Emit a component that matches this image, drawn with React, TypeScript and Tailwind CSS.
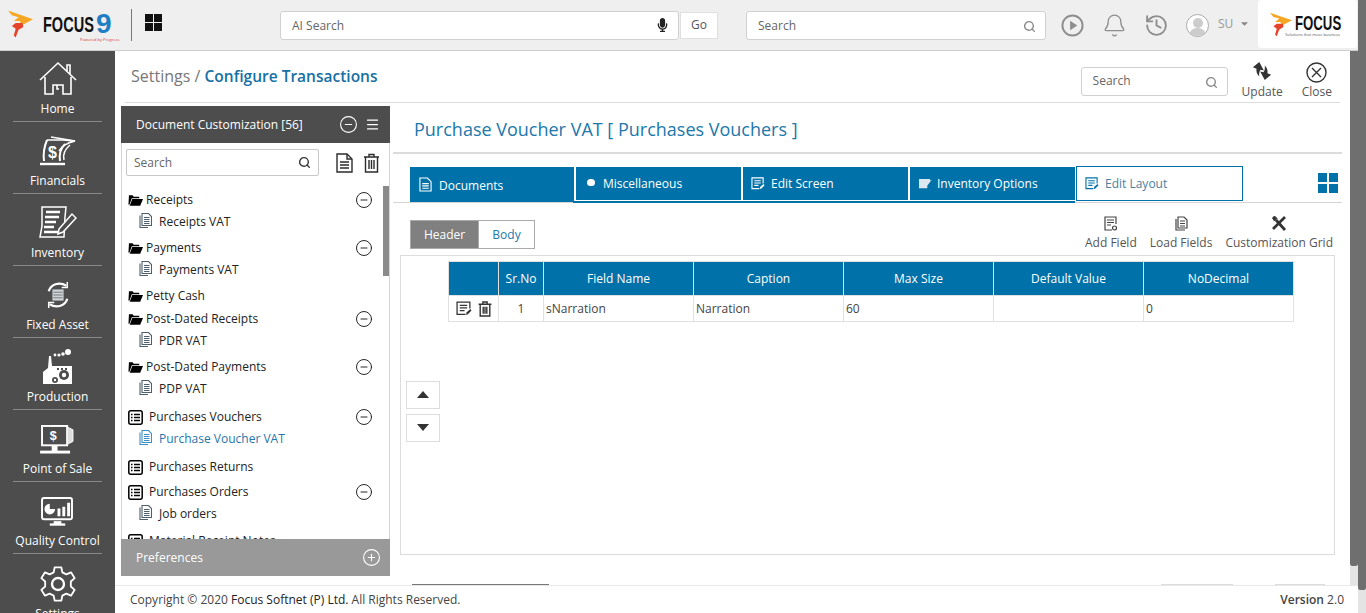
import type { ReactNode } from 'react';
import { Bell, CircleMinus, CirclePlus, History, Menu, Search } from 'lucide-react';
import { FaMicrophone, FaCaretDown } from 'react-icons/fa';

function Flame({ className }: { className: string }) {
  return (
    <svg viewBox="0 0 26 28" className={className}>
      <path d="M0 0 L26 9 L15 15 L12 11 L6 11 L11 7 L4 5 Z" fill="#f5a623" />
      <path d="M8 13 L15 13 L16 17 L11 20 L8 28 L6 26 L8 19 L4 16 Z" fill="#e5432a" />
    </svg>
  );
}

function HomeIcon() {
  return (
    <svg viewBox="0 0 38 36" className="w-[38px] h-[36px]" fill="none" stroke="#fff" strokeWidth="1.6">
      <path d="M1 19 L19 2 L37 19" />
      <path d="M28 10 V4 H31 V13" />
      <path d="M6 16 V33 H14 V24 H24 V33 H32 V16" />
      <path d="M18 24 V28 H20" />
    </svg>
  );
}

function FinancialsIcon() {
  return (
    <svg viewBox="0 0 38 32" className="w-[38px] h-[32px]" fill="none" stroke="#fff" strokeWidth="2">
      <path d="M8 5 C5 12 4 18 5 26" />
      <path d="M8 5 H24 L36 6 C28 8 22 12 20 16" strokeWidth="1.5" />
      <path d="M12 2 L36 6" strokeWidth="1.5" />
      <path d="M26 9 C21 14 20 20 21 26" />
      <path d="M31 10 C25 15 24 21 25 25" strokeWidth="1.5" />
      <path d="M1 29 H26" strokeWidth="2.4" />
      <text x="9" y="23" fontSize="16" fontWeight="700" fill="#fff" stroke="none" fontFamily="'Liberation Sans', sans-serif">$</text>
    </svg>
  );
}

function InventoryIcon() {
  return (
    <svg viewBox="0 0 38 34" className="w-[38px] h-[34px]" fill="none" stroke="#fff" strokeWidth="1.5">
      <path d="M3 1 H27 L26 11 L25 31 H1 L3 20 Z" />
      <path d="M7 6 H21 M6 11 H20 M6 16 H17 M5 21 H15 M5 26 H19" strokeWidth="2.4" />
      <path d="M20 23 L33 8 L37 12 L24 26 L19 28 Z" fill="#4d4d4d" />
    </svg>
  );
}

function FixedAssetIcon() {
  return (
    <svg viewBox="0 0 28 30" className="w-[26px] h-[28px]" fill="none" stroke="#fff" strokeWidth="2.4">
      <path d="M4 11 C6 4 15 0 23 5" />
      <path d="M24 1 V7 H18" strokeWidth="1.6" />
      <path d="M24 19 C22 26 13 30 5 25" />
      <path d="M4 29 V23 H10" strokeWidth="1.6" />
      <rect x="8" y="9" width="12" height="12" fill="#cfd4d8" stroke="none" />
      <path d="M9 12 H19 M9 15 H19 M9 18 H19" stroke="#6f7478" strokeWidth="1" />
    </svg>
  );
}

function ProductionIcon() {
  return (
    <svg viewBox="0 0 32 36" className="w-[32px] h-[36px]" fill="#fff">
      <path d="M1 23 L6 19 L7 7 H9 L10 17 H30 V35 H1 Z" />
      <circle cx="13" cy="6" r="1.4" />
      <circle cx="17" cy="6" r="1.6" />
      <circle cx="21" cy="5" r="1.8" />
      <circle cx="26" cy="3" r="3" />
      <circle cx="22" cy="26" r="5" fill="#4d4d4d" />
      <circle cx="22" cy="26" r="2.2" />
      <circle cx="13" cy="31" r="3" fill="#4d4d4d" />
      <circle cx="13" cy="31" r="1.2" />
      <path d="M15 19 H17 V21 H15 Z M19 19 H21 V21 H19 Z M23 19 H25 V21 H23 Z" fill="#4d4d4d" />
    </svg>
  );
}

function PosIcon() {
  return (
    <svg viewBox="0 0 38 30" className="w-[37px] h-[29px]" fill="none" stroke="#fff" strokeWidth="2">
      <rect x="3" y="1" width="26" height="20" />
      <path d="M29 2 L35 5 V17 L29 20 Z" fill="#ddd" strokeWidth="1" />
      <path d="M14 21 V26 H18 V21" fill="#fff" />
      <path d="M1 28 H32" strokeWidth="3" />
      <text x="11" y="16" fontSize="13" fontWeight="700" fill="#fff" stroke="none" fontFamily="'Liberation Sans', sans-serif">$</text>
    </svg>
  );
}

function QualityIcon() {
  return (
    <svg viewBox="0 0 34 30" className="w-[33px] h-[29px]" fill="none" stroke="#fff" strokeWidth="2">
      <rect x="1" y="1" width="31" height="22" rx="2" />
      <path d="M14 25 V27 H20 V25" fill="#fff" />
      <path d="M9 28.5 H25" strokeWidth="2.4" />
      <path d="M9 7 A5.5 5.5 0 1 0 14.5 12.5 H9 Z" fill="#fff" stroke="none" />
      <path d="M17 12 H20 V20 H17 Z M22 10 H25 V20 H22 Z M27 6 H30 V20 H27 Z" fill="#fff" stroke="none" />
    </svg>
  );
}

function SettingsIcon() {
  return (
    <svg viewBox="0 0 24 24" className="w-[40px] h-[40px]" fill="none" stroke="#fff" strokeWidth="1.1">
      <circle cx="12" cy="12" r="3.6" strokeWidth="1.4" />
      <path d="M10 2 H14 L14.6 5 L17 6.2 L19.8 5 L22 8.5 L19.7 10.5 V13.5 L22 15.5 L19.8 19 L17 17.8 L14.6 19 L14 22 H10 L9.4 19 L7 17.8 L4.2 19 L2 15.5 L4.3 13.5 V10.5 L2 8.5 L4.2 5 L7 6.2 L9.4 5 Z" strokeLinejoin="round" />
    </svg>
  );
}

function NavItem({ icon, label, last, first }: { icon: ReactNode; label: string; last?: boolean; first?: boolean }) {
  return (
    <div className={`shrink-0 w-[89px] mx-auto flex flex-col items-center justify-end pb-[3px] ${first ? 'h-[71px]' : 'h-[72px]'} ${last ? 'border-b-0' : 'border-b border-[#8a8a8a]'}`}>
      <div className="h-[40px] flex items-center justify-center">{icon}</div>
      <span className="mt-[1px] leading-[18px] text-[12px] text-white whitespace-nowrap">{label}</span>
    </div>
  );
}

function FolderIcon() {
  return (
    <svg viewBox="0 0 16 12" className="w-[15px] h-[12px] shrink-0" fill="#000">
      <path d="M1 1 H5 L6 2.5 H12 V4 H4 L1.5 11 H0.5 Z" />
      <path d="M4.5 5 H16 L13 12 H1.8 Z" />
    </svg>
  );
}

function ListIcon() {
  return (
    <svg viewBox="0 0 15 15" className="w-[15px] h-[15px] shrink-0" fill="none" stroke="#000" strokeWidth="1.5">
      <rect x="0.8" y="0.8" width="13.4" height="13.4" rx="2" />
      <path d="M3 4.5 H4.5 M6 4.5 H12 M3 7.5 H4.5 M6 7.5 H12 M3 10.5 H4.5 M6 10.5 H12" strokeWidth="1.3" />
    </svg>
  );
}

function LeafIcon({ active }: { active?: boolean }) {
  const c = active ? '#3f8fc4' : '#4f5f6c';
  return (
    <svg viewBox="0 0 13 15" className="w-[13px] h-[15px] shrink-0 -mt-[3px]" fill="none" stroke={c} strokeWidth="1.1">
      <path d="M1 2.5 V14.5 H9" />
      <path d="M3 0.5 H9.5 L12.5 3.5 V12.5 H3 Z" fill="#fff" />
      <path d="M5 4.5 H10.5 M5 6.5 H10.5 M5 8.5 H10.5 M5 10.5 H10.5" />
    </svg>
  );
}

type TreeGroup = { name: string; icon: 'folder' | 'list'; leaf?: string; active?: boolean; cls: string; toggle?: boolean };

const TREE: TreeGroup[] = [
  { name: 'Receipts', icon: 'folder', leaf: 'Receipts VAT', cls: 'h-[48px]', toggle: true },
  { name: 'Payments', icon: 'folder', leaf: 'Payments VAT', cls: 'h-[48px]', toggle: true },
  { name: 'Petty Cash', icon: 'folder', cls: 'h-[23px]' },
  { name: 'Post-Dated Receipts', icon: 'folder', leaf: 'PDR VAT', cls: 'h-[48px]', toggle: true },
  { name: 'Post-Dated Payments', icon: 'folder', leaf: 'PDP VAT', cls: 'h-[50px]', toggle: true },
  { name: 'Purchases Vouchers', icon: 'list', leaf: 'Purchase Voucher VAT', active: true, cls: 'h-[50px]', toggle: true },
  { name: 'Purchases Returns', icon: 'list', cls: 'h-[25px]' },
  { name: 'Purchases Orders', icon: 'list', leaf: 'Job orders', cls: 'h-[49px]', toggle: true },
  { name: 'Material Receipt Notes', icon: 'list', cls: 'h-[25px]' },
];

function Tree() {
  return (
    <div className="relative flex-1 min-h-0 overflow-hidden pt-[3px]">
      {TREE.map((g) => (
        <div key={g.name} className={g.cls}>
          <div className={`flex items-center h-[22px] pl-[6px] text-[12px] text-[#222] ${g.icon === 'folder' ? 'gap-[3px]' : 'gap-[6px]'}`}>
            {g.icon === 'folder' ? <FolderIcon /> : <ListIcon />}
            <span className="whitespace-nowrap">{g.name}</span>
            {g.toggle && <CircleMinus className="w-[18px] h-[18px] ml-auto mr-[16px] text-[#222]" strokeWidth={1.3} />}
          </div>
          {g.leaf && (
            <div className={`flex items-center gap-[7px] pl-[17px] h-[22px] text-[12px] ${g.active ? 'text-[#1f77ac]' : 'text-[#222]'}`}>
              <LeafIcon active={g.active} />
              <span>{g.leaf}</span>
            </div>
          )}
        </div>
      ))}
      {/* tree scrollbar */}
      <div className="absolute right-0 top-0 w-[6px] h-[90px] bg-[#8a8a8a]" />
    </div>
  );
}

function TreePanel() {
  return (
    <div className="w-[269px] shrink-0 ml-[6px] mt-[3px] mb-[9px] flex flex-col bg-white">
      <div className="h-[37px] shrink-0 bg-[#4d4d4d] flex items-center pl-[15px] pr-[10px] text-[12px] text-white">
        <span>Document Customization [56]</span>
        <CircleMinus className="ml-auto w-[19px] h-[19px]" strokeWidth={1.4} />
        <Menu className="ml-[7px] w-[15px] h-[15px]" strokeWidth={2} />
      </div>
      <div className="flex-1 min-h-0 flex flex-col border-x border-[#d4d4d4]">
        <div className="h-[39px] mb-[4px] shrink-0 flex items-center pl-[4px]">
          <div className="w-[193px] h-[27px] flex items-center justify-between px-[7px] border border-[#c8c8c8] rounded-[2px] text-[12px] text-[#666]">
            <span>Search</span>
            <Search className="w-[13px] h-[13px] text-[#333]" strokeWidth={2.6} />
          </div>
          <svg viewBox="0 0 17 20" className="ml-[17px] w-[17px] h-[20px]" fill="none" stroke="#2c2c2c" strokeWidth="1.4">
            <path d="M1 1 H11 L16 6 V19 H1 Z" />
            <path d="M11 1 V6 H16 M4 9 H13 M4 12 H13 M4 15 H13" />
          </svg>
          <svg viewBox="0 0 17 20" className="ml-[10px] w-[17px] h-[20px]" fill="none" stroke="#2c2c2c" strokeWidth="1.4">
            <path d="M1 4 H16 M6 4 V1.5 H11 V4 M2.5 4 V19 H14.5 V4 M6 7 V16 M8.5 7 V16 M11 7 V16" />
          </svg>
        </div>
        <Tree />
      </div>
      <div className="h-[37px] shrink-0 bg-[#999] flex items-center pl-[15px] pr-[9px] text-[12px] text-white">
        <span>Preferences</span>
        <CirclePlus className="ml-auto w-[19px] h-[19px]" strokeWidth={1.4} />
      </div>
    </div>
  );
}

function TabDoc({ color = '#fff' }: { color?: string }) {
  return (
    <svg viewBox="0 0 14 16" className="w-[13px] h-[15px] -mt-[2px]" fill="none" stroke={color} strokeWidth="1.2">
      <path d="M1 1 H9 L13 5 V15 H1 Z M3.5 7 H10.5 M3.5 9.5 H10.5 M3.5 12 H10.5" />
    </svg>
  );
}

function TabEdit({ color = '#fff', className = 'w-[14px] h-[13px]' }: { color?: string; className?: string }) {
  return (
    <svg viewBox="0 0 15 14" className={className} fill="none" stroke={color} strokeWidth="1.2">
      <path d="M9 12.5 H1 V1 H13 V7 M3.5 4 H10.5 M3.5 6.5 H10.5 M3.5 9 H8" />
      <path d="M9.5 13 L10 10.5 L13.5 7.5 L14.5 8.8 L11.2 12.5 Z" fill={color} stroke="none" />
    </svg>
  );
}

function Tabs() {
  return (
    <div className="relative shrink-0 flex h-[37px] mt-[13px] pl-[17px] pr-[4px]">
      <div className="absolute left-0 right-0 top-[35px] h-px bg-[#d4d4d4]" />
      <div className="relative flex items-start">
        <div className="w-[164px] h-[35px] shrink-0 flex items-center gap-[7px] pl-[9px] pt-[2px] bg-[#0072a9] text-white text-[12px]">
          <TabDoc />
          <span>Documents</span>
        </div>
        <div className="flex flex-col">
          <div className="flex h-[33px] text-white text-[12px]">
            <div className="w-[165px] ml-[2px] flex items-center gap-[8px] pl-[11px] bg-[#0072a9]">
              <span className="w-[8px] h-[7px] rounded-full bg-white mb-[3px]" />
              <span>Miscellaneous</span>
            </div>
            <div className="w-[165px] ml-[2px] flex items-center gap-[6px] pl-[8px] bg-[#0072a9]">
              <TabEdit />
              <span>Edit Screen</span>
            </div>
            <div className="w-[165px] ml-[2px] flex items-center gap-[5px] pl-[8px] bg-[#0072a9]">
              <svg viewBox="0 0 15 13" className="w-[14px] h-[12px]" fill="#dce8ef">
                <path d="M1 1 H13 V3 L15 2 L10 8 V11 H1 Z" />
              </svg>
              <span>Inventory Options</span>
            </div>
          </div>
          <div className="h-[2px] mt-[1px] -ml-px bg-[#0072a9]" />
        </div>
        <div className="-mt-[1px] ml-px w-[167px] h-[35px] shrink-0 flex items-center gap-[6px] pl-[8px] bg-white border border-[#0072a9] text-[12px] text-[#4a7f9e]">
          <TabEdit color="#0072a9" />
          <span>Edit Layout</span>
        </div>
      </div>
      <div className="relative ml-auto mt-[6px] grid grid-cols-2 gap-[2px] w-[20px] h-[20px]">
        <span className="bg-[#0072a9]" />
        <span className="bg-[#0072a9]" />
        <span className="bg-[#0072a9]" />
        <span className="bg-[#0072a9]" />
      </div>
    </div>
  );
}

function ToolAction({ icon, label }: { icon: ReactNode; label: string }) {
  return (
    <div className="flex flex-col items-center text-[12px] leading-[16px] text-[#555]">
      <div className="h-[18px] mb-[3px] flex items-center">{icon}</div>
      <span className="whitespace-nowrap">{label}</span>
    </div>
  );
}

const HEADS = ['', 'Sr.No', 'Field Name', 'Caption', 'Max Size', 'Default Value', 'NoDecimal'];

function FieldTable() {
  return (
    <table className="table-fixed w-[845px] border-collapse text-[12px] text-[#444]">
      <colgroup>
        <col className="w-[50px]" />
        <col className="w-[45px]" />
        <col className="w-[150px]" />
        <col className="w-[150px]" />
        <col className="w-[150px]" />
        <col className="w-[150px]" />
        <col className="w-[150px]" />
      </colgroup>
      <thead>
        <tr className="h-[34px] bg-[#0072a9] text-white">
          {HEADS.map((h, i) => (
            <th key={i} className="font-normal border border-[#e0e0e0] p-0">{h}</th>
          ))}
        </tr>
      </thead>
      <tbody>
        <tr className="h-[26px]">
          <td className="border border-[#e0e0e0] p-0">
            <div className="flex items-center justify-center gap-[6px]">
              <TabEdit color="#333" className="w-[16px] h-[15px]" />
              <svg viewBox="0 0 13 15" className="w-[14px] h-[16px]" fill="none" stroke="#333" strokeWidth="1.3">
                <path d="M0.5 3 H12.5 M4.5 3 V1 H8.5 V3 M2 3 V14 H11 V3 M4.8 5.5 V12 M6.5 5.5 V12 M8.2 5.5 V12" />
              </svg>
            </div>
          </td>
          <td className="border border-[#e0e0e0] p-0 text-center">1</td>
          <td className="border border-[#e0e0e0] px-[2px] py-0">sNarration</td>
          <td className="border border-[#e0e0e0] px-[2px] py-0">Narration</td>
          <td className="border border-[#e0e0e0] px-[2px] py-0">60</td>
          <td className="border border-[#e0e0e0] px-[2px] py-0"></td>
          <td className="border border-[#e0e0e0] px-[2px] py-0">0</td>
        </tr>
      </tbody>
    </table>
  );
}

function EditorPanel() {
  return (
    <div className="flex-1 min-w-0 ml-[3px] mr-[8px] flex flex-col overflow-hidden bg-white">
      <div className="h-[51px] shrink-0 flex items-center pl-[21px] pt-[4px] text-[18px] text-[#2078ab] border-b-2 border-[#dcdcdc]">
        Purchase Voucher VAT [ Purchases Vouchers ]
      </div>
      <Tabs />
      <div className="shrink-0 flex items-start justify-between h-[51px] pl-[17px] pr-[9px] pt-[16px]">
        <div className="flex h-[29px] text-[12px]">
          <div className="w-[69px] flex items-center justify-center bg-[#808080] border border-[#aaa] text-white">Header</div>
          <div className="w-[56px] flex items-center justify-center border border-[#aaa] border-l-0 text-[#2078ab]">Body</div>
        </div>
        <div className="flex gap-[13px] -mt-[6px]">
          <ToolAction label="Add Field" icon={
            <svg viewBox="0 0 13 15" className="w-[13px] h-[15px]" fill="none" stroke="#444" strokeWidth="1.2">
              <path d="M12 8 V1 H1 V14 H8 M3 4 H10 M3 6.5 H10 M3 9 H7" />
              <circle cx="10.5" cy="12" r="2" />
            </svg>
          } />
          <ToolAction label="Load Fields" icon={
            <svg viewBox="0 0 13 15" className="w-[13px] h-[15px]" fill="none" stroke="#444" strokeWidth="1.2">
              <path d="M1 3 V14 H10 M3 1 H9 L12 4 V12 H3 Z M5 5 H10 M5 7.5 H10 M5 10 H10" />
            </svg>
          } />
          <ToolAction label="Customization Grid" icon={
            <svg viewBox="0 0 16 16" className="w-[16px] h-[16px]" fill="none" stroke="#333">
              <path d="M5 5 L14 15" strokeWidth="2.8" />
              <path d="M1.5 3 L3.5 1 L6 3.5 L3.5 6 Z" fill="#333" strokeWidth="1" />
              <path d="M14 2 L2 14" strokeWidth="2.6" />
            </svg>
          } />
        </div>
      </div>
      <div className="h-[300px] shrink-0 mx-[7px] border border-[#dcdcdc] flex flex-col pt-[5px]">
        <div className="pl-[47px]">
          <FieldTable />
        </div>
        <div className="mt-[59px] pl-[5px] flex flex-col gap-[5px]">
          <div className="w-[34px] h-[28px] border border-[#ddd] flex items-center justify-center">
            <span className="w-0 h-0 mb-[2px] border-x-[6px] border-x-transparent border-b-[7px] border-b-[#333]" />
          </div>
          <div className="w-[34px] h-[28px] border border-[#ddd] flex items-center justify-center">
            <span className="w-0 h-0 mb-[2px] border-x-[6px] border-x-transparent border-t-[7px] border-t-[#333]" />
          </div>
        </div>
      </div>
      {/* action buttons cut off by the footer */}
      <div className="mt-[29px] h-[2px] shrink-0 flex pl-[19px]">
        <span className="w-[137px] bg-[#777]" />
        <span className="ml-[612px] w-[72px] bg-[#ddd]" />
        <span className="ml-[42px] w-[50px] bg-[#ddd]" />
      </div>
    </div>
  );
}

function TopBar() {
  return (
    <header className="h-[51px] shrink-0 flex items-center bg-[#efefef] border-b border-[#cfcfcf]">
      <div className="relative w-[131px] h-full shrink-0 flex items-center pl-[8px]">
        <Flame className="w-[25px] h-[28px] -mt-[2px]" />
        <span className="ml-[10px] w-[53px] -mt-[1px] whitespace-nowrap font-['Liberation_Sans',sans-serif] font-bold text-[22px] text-[#111] inline-block scale-x-[0.66] origin-left">FOCUS</span>
        <span className="-mt-[3px] leading-none font-['Liberation_Sans',sans-serif] font-bold text-[28px] text-[#1f7fc4]">9</span>
        <span className="absolute left-[80px] top-[37px] text-[4px] leading-[5px] whitespace-nowrap text-[#d43a3a]">Powered by Progress</span>
      </div>
      <div className="w-px h-[32px] bg-[#777] shrink-0 -mt-[1px]" />
      <div className="ml-[13px] grid grid-cols-2 gap-[1px] w-[17px] h-[17px] -mt-[5px] shrink-0">
        <span className="bg-[#111]" />
        <span className="bg-[#111]" />
        <span className="bg-[#111]" />
        <span className="bg-[#111]" />
      </div>
      <div className="ml-[118px] w-[399px] h-[29px] flex items-center justify-between pl-[11px] pr-[10px] bg-white border border-[#d0d0d0] rounded-[3px] text-[12px] text-[#666] shrink-0">
        <span className="mt-[1px]">AI Search</span>
        <FaMicrophone className="w-[11px] h-[14px] text-[#222]" />
      </div>
      <div className="ml-px w-[38px] h-[27px] flex items-center justify-center bg-white border border-[#e0e0e0] text-[12px] text-[#555] shrink-0">Go</div>
      <div className="ml-[28px] w-[300px] h-[29px] flex items-center justify-between pl-[11px] pr-[9px] bg-white border border-[#d0d0d0] rounded-[3px] text-[12px] text-[#666] shrink-0">
        <span className="mt-[1px]">Search</span>
        <Search className="w-[13px] h-[13px] text-[#888] mt-[2px]" strokeWidth={2.6} />
      </div>
      <svg viewBox="0 0 24 24" className="ml-[15px] w-[23px] h-[23px] shrink-0" fill="none" stroke="#8d8d8d" strokeWidth="2">
        <circle cx="12" cy="12" r="10.5" />
        <path d="M9.5 7 L17 12 L9.5 17 Z" fill="#8d8d8d" stroke="none" />
      </svg>
      <Bell className="ml-[18px] w-[25px] h-[25px] text-[#8d8d8d] shrink-0" strokeWidth={1.2} />
      <History className="ml-[17px] w-[25px] h-[25px] text-[#8d8d8d] shrink-0" strokeWidth={1.8} />
      <div className="ml-[17px] w-[23px] h-[23px] rounded-full bg-white border border-[#aaa] overflow-hidden flex flex-col items-center shrink-0">
        <span className="mt-[3px] w-[10px] h-[11px] rounded-full bg-[#ccc]" />
        <span className="w-[17px] h-[8px] rounded-t-full bg-[#ccc]" />
      </div>
      <span className="ml-[9px] text-[12px] text-[#999] shrink-0 -mt-[3px]">SU</span>
      <FaCaretDown className="ml-[6px] w-[11px] h-[11px] text-[#888] shrink-0 -mt-[3px]" />
      <div className="relative ml-[8px] w-[99px] h-[48px] -mt-[2px] shrink-0 flex items-center pl-[12px] bg-white rounded-[3px]">
        <Flame className="w-[22px] h-[25px]" />
        <span className="ml-[3px] -mt-[2px] w-[46px] whitespace-nowrap font-['Liberation_Sans',sans-serif] font-bold text-[20px] text-[#111] inline-block scale-x-[0.66] origin-left">FOCUS</span>
        <span className="absolute left-[27px] top-[32px] text-[4px] leading-[5px] whitespace-nowrap text-[#555]">Solutions that move business</span>
      </div>
    </header>
  );
}

function TitleBar() {
  return (
    <div className="h-[52px] shrink-0 mx-[10px] flex pl-[6px] pr-[8px] border-b border-[#dcdcdc]">
      <h1 className="self-center text-[16px] text-[#777]">
        Settings / <span className="text-[15.5px] font-semibold text-[#1670a3]">Configure Transactions</span>
      </h1>
      <div className="self-center ml-auto w-[147px] h-[29px] flex items-center justify-between pl-[11px] pr-[9px] border border-[#d0d0d0] rounded-[3px] text-[12px] text-[#666] mt-[9px]">
        <span>Search</span>
        <Search className="w-[13px] h-[13px] text-[#888] mt-[3px]" strokeWidth={2.6} />
      </div>
      <div className="self-end pb-[2px] ml-[14px] flex flex-col items-center text-[12px] leading-[16px] text-[#555]">
        <svg viewBox="0 0 22 20" className="w-[20px] h-[20px] mb-[3px]" fill="#333">
          <path d="M8 0 L1 6 L5 7.5 C4.5 10 5 13 8 16 C7.5 13 8 10 9.5 8.5 L13 9.5 Z" />
          <path d="M14 20 L21 14 L17 12.5 C17.5 10 17 7 14 4 C14.5 7 14 10 12.5 11.5 L9 10.5 Z" />
        </svg>
        Update
      </div>
      <div className="self-end pb-[2px] ml-[19px] flex flex-col items-center text-[12px] leading-[16px] text-[#555]">
        <svg viewBox="0 0 21 21" className="w-[21px] h-[21px] mb-[1px]" fill="none" stroke="#333" strokeWidth="1.4">
          <circle cx="10.5" cy="10.5" r="9.5" />
          <path d="M6 6 L15 15 M15 6 L6 15" />
        </svg>
        Close
      </div>
    </div>
  );
}

export default function App() {
  return (
    <div className="relative h-[613px] w-[1366px] overflow-hidden flex bg-white font-['Open_Sans',sans-serif]">
      <div className="flex-1 min-w-0 flex flex-col">
        <TopBar />
        <div className="flex-1 min-h-0 flex">
          <aside className="w-[115px] shrink-0 overflow-hidden bg-[#4d4d4d] flex flex-col">
            <NavItem first icon={<HomeIcon />} label="Home" />
            <NavItem icon={<FinancialsIcon />} label="Financials" />
            <NavItem icon={<InventoryIcon />} label="Inventory" />
            <NavItem icon={<FixedAssetIcon />} label="Fixed Asset" />
            <NavItem icon={<ProductionIcon />} label="Production" />
            <NavItem icon={<PosIcon />} label="Point of Sale" />
            <NavItem icon={<QualityIcon />} label="Quality Control" />
            <NavItem last icon={<SettingsIcon />} label="Settings" />
          </aside>
          <div className="flex-1 min-w-0 flex flex-col">
            <div className="flex-1 min-h-0 flex">
              <div className="flex-1 min-w-0 flex flex-col">
                <TitleBar />
                <div className="flex-1 min-h-0 flex">
                  <TreePanel />
                  <EditorPanel />
                </div>
              </div>
              <div className="w-[8px] shrink-0 flex flex-col">
                <div className="flex-1 bg-[#6f6f6f] rounded-b-[2px]" />
                <div className="h-[19px] bg-[#e4e4e4]" />
              </div>
            </div>
            <footer className="h-[28px] shrink-0 flex items-center justify-between pl-[15px] pr-[14px] bg-white border-t border-[#e8e8e8] text-[12px] text-[#444]">
              <span>
                Copyright © 2020 <span className="font-medium text-[#222]">Focus Softnet (P) Ltd.</span> All Rights Reserved.
              </span>
              <span>
                <span className="font-semibold">Version</span> 2.0
              </span>
            </footer>
          </div>
        </div>
      </div>
      <div className="w-[8px] shrink-0 flex flex-col">
        <div className="h-[590px] bg-[#6f6f6f] rounded-b-[2px]" />
        <div className="flex-1 bg-[#e4e4e4]" />
      </div>
    </div>
  );
}
